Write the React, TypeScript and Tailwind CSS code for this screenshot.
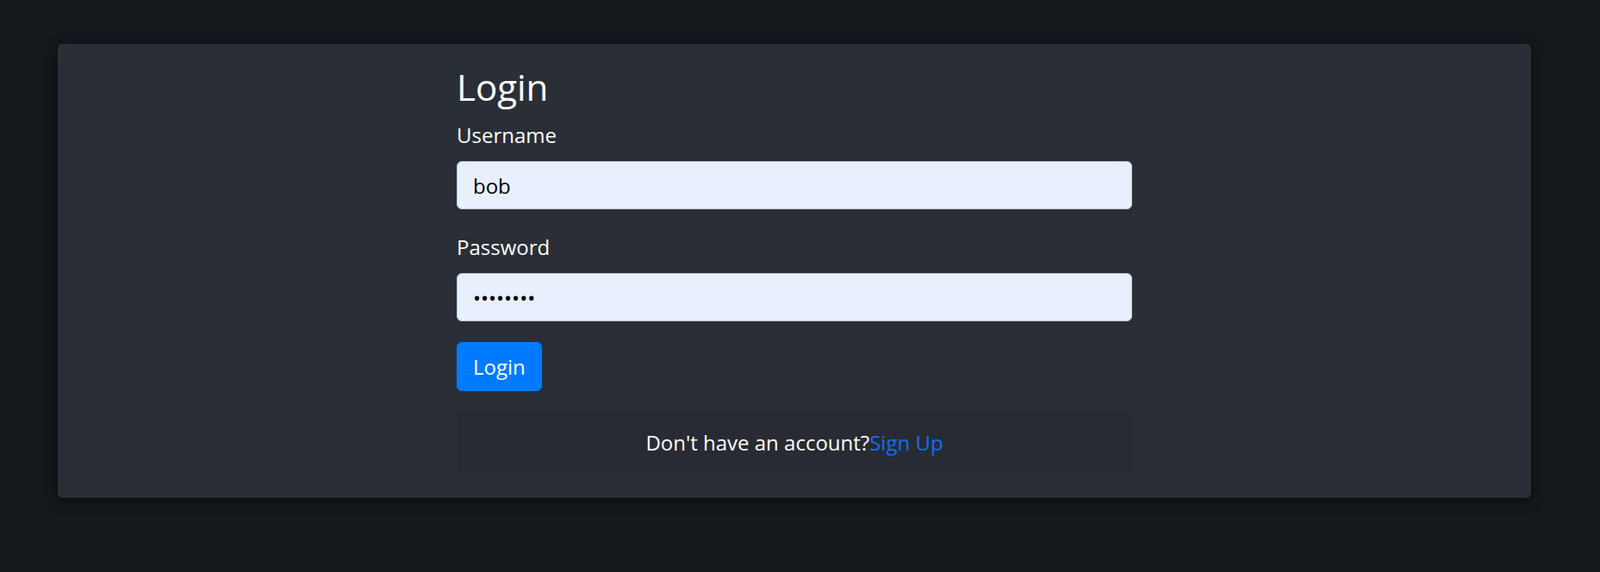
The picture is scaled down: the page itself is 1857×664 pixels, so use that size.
import React from 'react';

const font = { fontFamily: '"Open Sans", "Noto Sans", sans-serif' };

export default function App() {
  return (
    <div className="min-h-[664px] bg-[#14181c] pt-[51px] pb-[80px]" style={font}>
      <div className="ml-[67px] w-[1710px] rounded-[5px] bg-[#2a2e37] pt-[25px] pb-[29px] shadow-[0_4px_14px_rgba(0,0,0,0.55)]">
        <div className="mx-auto w-[784px] text-white">
          <h1 className="mb-[13px] text-[42px] leading-[1.2] font-normal">Login</h1>

          <form onSubmit={(e) => e.preventDefault()}>
            <div className="mb-[26px]">
              <label className="mb-[12px] block text-[24px] leading-[36px]">Username</label>
              <input
                type="text"
                defaultValue="bob"
                className="block h-[56px] w-full rounded-[6px] border border-[#bfc4cc] bg-[#e8f0fe] px-[18px] text-[24px] text-black outline-none"
              />
            </div>

            <div className="mb-[24px]">
              <label className="mb-[12px] block text-[24px] leading-[36px]">Password</label>
              <input
                type="password"
                defaultValue="password"
                className="block h-[56px] w-full rounded-[6px] border border-[#bfc4cc] bg-[#e8f0fe] px-[18px] text-[24px] text-black outline-none"
              />
            </div>

            <button
              type="submit"
              className="h-[57px] rounded-[6px] border border-[#007bff] bg-[#007bff] px-[18px] text-[24px] leading-[36px] text-white"
            >
              Login
            </button>
          </form>

          <div className="mt-[24px] border-t border-[#24272e] bg-[#282b33] py-[17px] text-center text-[24px] leading-[36px]">
            Don't have an account?
            <a href="#" className="text-[#0d6efd]">Sign Up</a>
          </div>
        </div>
      </div>
    </div>
  );
}
